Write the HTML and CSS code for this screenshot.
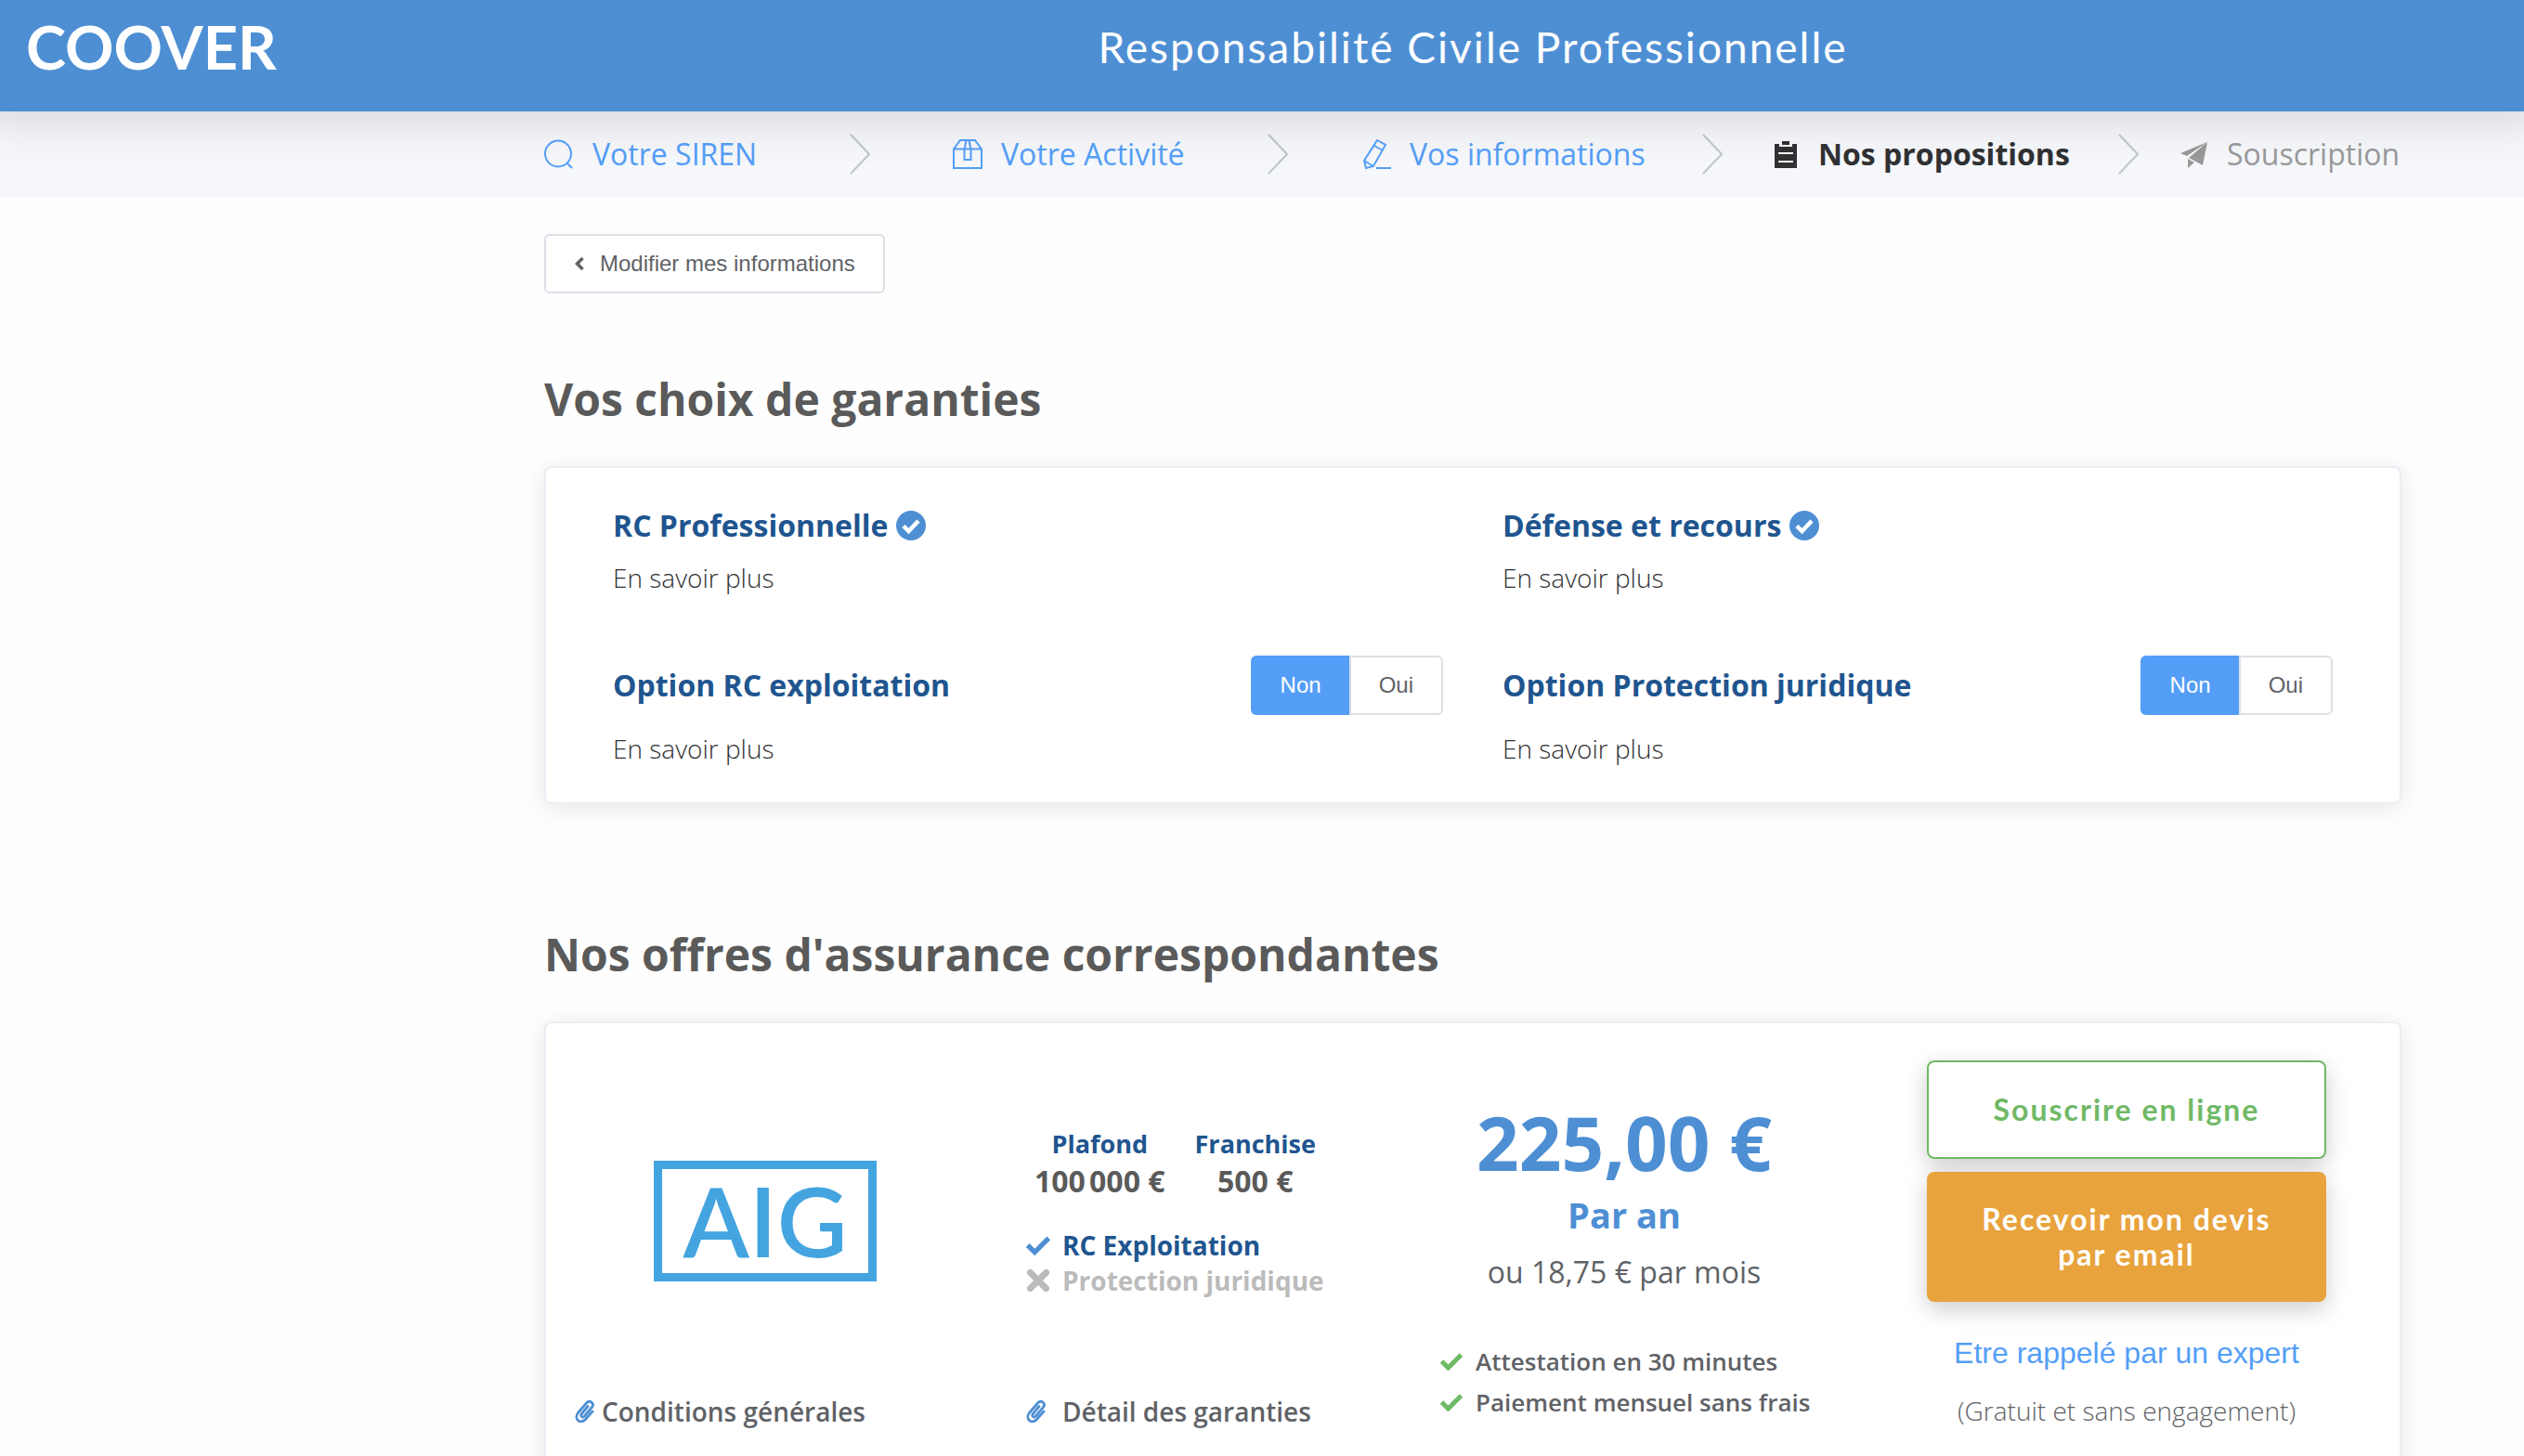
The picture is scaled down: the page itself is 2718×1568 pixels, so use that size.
FILE: index.html
```html
<!DOCTYPE html>
<html lang="fr">
<head>
<meta charset="utf-8">
<title>Coover – Responsabilité Civile Professionnelle</title>
<link rel="stylesheet" href="styles.css">
</head>
<body>
<svg class="sprite" aria-hidden="true">
  <symbol id="check" viewBox="0 0 26 20"><path d="M2.500 10L9.500 17L23.500 3" fill="none" stroke="currentColor" stroke-width="5" stroke-linejoin="miter"/></symbol>
  <symbol id="cross" viewBox="0 0 26 26"><path d="M4.500 4.500L21.500 21.500M21.500 4.500L4.500 21.500" fill="none" stroke="currentColor" stroke-width="7" stroke-linecap="round"/></symbol>
  <symbol id="badge" viewBox="0 0 32 32"><circle cx="16" cy="16" r="16" fill="currentColor"/><path d="M8 16.500L13.500 22L24 11" fill="none" stroke="#fff" stroke-width="4.500"/></symbol>
  <symbol id="clip" viewBox="0 0 24 26"><path d="M15 7.500L8.500 15.500C6.500 18 9.500 20.500 11.500 18L19.500 8.500C22.500 4 17 0 13.500 4L4.500 14.500C-.500 21 7 27.500 12.500 21.500L20 13" fill="none" stroke="currentColor" stroke-width="2.800" stroke-linecap="round"/></symbol>
  <symbol id="arrow" viewBox="0 0 22 44"><path d="M1 1L21 22L1 43" fill="none" stroke="currentColor" stroke-width="2"/></symbol>
</svg>
<div class="shell">
  <header class="topbar">
    <a class="brand" href="#">COOVER</a>
    <h1 class="topbar-title">Responsabilité Civile Professionnelle</h1>
  </header>
  <nav class="steps" aria-label="Étapes">
    <ol class="steps-list">
      <li class="step"><a href="#" class="step-link"><svg class="step-icon" viewBox="0 0 32 32" fill="none" stroke="currentColor" stroke-width="2"><circle cx="15" cy="15.500" r="14"/><path d="M24.500 25.500L30 31"/></svg>Votre SIREN</a><svg class="step-arrow"><use href="#arrow"/></svg></li>
      <li class="step"><a href="#" class="step-link"><svg class="step-icon" viewBox="0 0 32 32" fill="none" stroke="currentColor" stroke-width="2"><path d="M1 31V10.500L8 1H24L31 10.500V31ZM1 10.500H31M14.500 1L12.500 11V22H19.500V11L17.500 1"/></svg>Votre Activité</a><svg class="step-arrow"><use href="#arrow"/></svg></li>
      <li class="step"><a href="#" class="step-link"><svg class="step-icon" viewBox="0 0 32 32" fill="none" stroke="currentColor" stroke-width="2"><path d="M17 1L26 6L13 29L5 31L3 23ZM14 7L23 12M3 23L13 29M16 31H32"/></svg>Vos informations</a><svg class="step-arrow"><use href="#arrow"/></svg></li>
      <li class="step step-current"><a href="#" class="step-link" aria-current="step"><svg class="step-icon" viewBox="0 0 32 32" fill="currentColor"><path d="M5 5H10V8H24V5H29V31H5ZM9 14V16H25V14ZM9 23V25H25V23Z" fill-rule="evenodd"/><path d="M13 2H21V6H13Z"/></svg>Nos propositions</a><svg class="step-arrow"><use href="#arrow"/></svg></li>
      <li class="step step-next"><span class="step-link"><svg class="step-icon" viewBox="0 0 32 32" fill="currentColor"><path d="M31 3L2 15L9 18ZM31 3L11 20L26 28ZM10 21L17 25L10 31Z"/></svg>Souscription</span></li>
    </ol>
  </nav>
  <main class="content">
    <button class="back" type="button"><svg class="back-icon" viewBox="0 0 12 16"><path d="M9.500 2L3.500 8L9.500 14" fill="none" stroke="currentColor" stroke-width="3.500"/></svg>Modifier mes informations</button>

    <h2 class="title">Vos choix de garanties</h2>
    <section class="card choices">
      <div class="choice">
        <h3 class="choice-name">RC Professionnelle <svg class="badge"><use href="#badge"/></svg></h3>
        <a class="more" href="#">En savoir plus</a>
      </div>
      <div class="choice">
        <h3 class="choice-name">Défense et recours <svg class="badge"><use href="#badge"/></svg></h3>
        <a class="more" href="#">En savoir plus</a>
      </div>
      <div class="choice choice-option">
        <div class="choice-row">
          <h3 class="choice-name">Option RC exploitation</h3>
          <div class="toggle" role="radiogroup" aria-label="Option RC exploitation">
            <label class="toggle-item"><input type="radio" name="exploitation" checked><span>Non</span></label>
            <label class="toggle-item"><input type="radio" name="exploitation"><span>Oui</span></label>
          </div>
        </div>
        <a class="more" href="#">En savoir plus</a>
      </div>
      <div class="choice choice-option">
        <div class="choice-row">
          <h3 class="choice-name">Option Protection juridique</h3>
          <div class="toggle" role="radiogroup" aria-label="Option Protection juridique">
            <label class="toggle-item"><input type="radio" name="juridique" checked><span>Non</span></label>
            <label class="toggle-item"><input type="radio" name="juridique"><span>Oui</span></label>
          </div>
        </div>
        <a class="more" href="#">En savoir plus</a>
      </div>
    </section>

    <h2 class="title title-offers">Nos offres d'assurance correspondantes</h2>
    <article class="card offer">
      <div class="offer-insurer">
        <div class="aig">AIG</div>
        <a class="doc" href="#"><svg class="clip"><use href="#clip"/></svg>Conditions générales</a>
      </div>
      <div class="offer-cover">
        <dl class="limits">
          <div class="limit"><dt>Plafond</dt><dd>100&#8239;000 €</dd></div>
          <div class="limit"><dt>Franchise</dt><dd>500 €</dd></div>
        </dl>
        <ul class="covers">
          <li class="cover"><svg class="cover-icon tick"><use href="#check"/></svg>RC Exploitation</li>
          <li class="cover cover-off"><svg class="cover-icon"><use href="#cross"/></svg>Protection juridique</li>
        </ul>
        <a class="doc doc-wide" href="#"><svg class="clip"><use href="#clip"/></svg>Détail des garanties</a>
      </div>
      <div class="offer-price">
        <p class="price">225,00 €</p>
        <p class="period">Par an</p>
        <p class="monthly">ou 18,75 € par mois</p>
        <ul class="perks">
          <li class="perk"><svg class="perk-icon"><use href="#check"/></svg>Attestation en 30 minutes</li>
          <li class="perk"><svg class="perk-icon"><use href="#check"/></svg>Paiement mensuel sans frais</li>
        </ul>
      </div>
      <div class="offer-actions">
        <button class="action action-outline" type="button">Souscrire en ligne</button>
        <button class="action action-solid" type="button">Recevoir mon devis par email</button>
        <a class="callback" href="#">Etre rappelé par un expert</a>
        <p class="note">(Gratuit et sans engagement)</p>
      </div>
    </article>
  </main>
</div>
</body>
</html>
```
FILE: styles.css
```css
* { box-sizing: border-box; }
body, h1, h2, h3, p, ul, ol, dl, dd { margin: 0; padding: 0; }
ul, ol { list-style: none; }
a { color: inherit; text-decoration: none; }
button { cursor: pointer; }

body {
  font-family: "Open Sans", "Noto Sans", sans-serif;
  color: #606266;
  background: #fefefe;
}
.sprite { display: none; }

.shell {
  display: flex;
  flex-direction: column;
  height: 100vh;
  overflow: hidden;
}

/* top bar */
.topbar {
  display: flex;
  flex: none;
  height: 120px;
  color: #fff;
  background: #4e8fd4;
  box-shadow: 0 -16px 48px 24px rgba(0, 0, 0, .14);
  z-index: 1;
}
.brand {
  width: 454px;
  padding: 14px 0 0 28px;
  font: 700 65px/72px Lato, sans-serif;
}
.topbar-title {
  flex: 1;
  padding-top: 23px;
  font: 400 46px/56px Lato, sans-serif;
  letter-spacing: 2px;
  text-align: center;
}

/* progress steps */
.steps {
  flex: none;
  padding: 24px 132px 24px 586px;
  background: #f5f7fa;
}
.steps-list { display: flex; }
.step {
  display: flex;
  flex: 0 0 22%;
  align-items: center;
  height: 44px;
  font-size: 32px;
  line-height: 44px;
  color: #549ef7;
  white-space: nowrap;
}
.step:last-child { flex-basis: 12%; }
.step-link { display: flex; align-items: center; gap: 20px; padding-right: 10px; }
.step-icon { width: 32px; height: 32px; }
.step-arrow {
  width: 22px;
  height: 44px;
  margin: 0 auto;
  color: #c0c4cc;
}
.step-current { font-weight: 700; color: #303133; }
.step-next { color: #999; }

/* page content */
.content {
  flex: 1;
  min-height: 0;
  padding: 40px 132px 40px 586px;
  overflow-y: auto;
  scrollbar-width: none;
}
.back {
  display: flex;
  align-items: center;
  gap: 16px;
  height: 64px;
  padding: 0 30px;
  font: 24px "Liberation Sans", Arial, sans-serif;
  color: #606266;
  background: #fff;
  border: 2px solid #dcdfe6;
  border-radius: 6px;
}
.back-icon { width: 12px; height: 16px; }
.title {
  margin: 80px 0 38px;
  font-size: 48px;
  line-height: 68px;
  color: #5a5a5a;
}
.title-offers { margin-top: 128px; }
.card {
  background: #fff;
  border: 2px solid #ebeef5;
  border-radius: 8px;
  box-shadow: 0 4px 24px rgba(0, 0, 0, .1);
}

/* cover choices */
.choices {
  display: grid;
  grid-template-columns: 1fr 1fr;
  column-gap: 64px;
  row-gap: 64px;
  padding: 40px 72px 38px;
}
.choice-row {
  display: flex;
  justify-content: space-between;
  align-items: center;
}
.choice-name {
  display: flex;
  align-items: center;
  gap: 9px;
  font-size: 32px;
  line-height: 44px;
  color: #20558f;
}
.badge { width: 32px; height: 32px; color: #4e8fd4; }
.more {
  display: block;
  margin-top: 14px;
  font-size: 28px;
  font-weight: 300;
  line-height: 40px;
  color: #303133;
}
.choice-option .more { margin-top: 16px; }
.toggle { display: flex; }
.toggle-item { position: relative; }
.toggle-item input {
  position: absolute;
  inset: 0;
  margin: 0;
  opacity: 0;
}
.toggle-item span {
  display: block;
  padding: 0 30px;
  font: 24px/60px "Liberation Sans", Arial, sans-serif;
  background: #fff;
  border: 2px solid #dcdfe6;
}
.toggle-item:first-child span { border-right-width: 0; border-radius: 6px 0 0 6px; }
.toggle-item:last-child span { border-radius: 0 6px 6px 0; }
.toggle-item input:checked + span {
  color: #fff;
  background: #549ef7;
  border-color: #549ef7;
}

/* offer */
.offer {
  display: grid;
  grid-template-columns: 474fr 440fr 494fr 588fr;
  min-height: 520px;
}
.offer-insurer {
  display: flex;
  flex-direction: column;
  align-items: flex-start;
  padding: 148px 0 0 30px;
}
.aig {
  width: 240px;
  height: 130px;
  margin: 0 0 120px 86px;
  font: 600 104px/110px Lato, sans-serif;
  text-align: center;
  color: #44a4e0;
  border: 9px solid #44a4e0;
}
.doc {
  display: flex;
  align-items: center;
  gap: 6px;
  font-size: 28px;
  font-weight: 600;
  line-height: 40px;
}
.doc-wide { gap: 16px; }
.clip { width: 24px; height: 26px; color: #4e8fd4; }
.offer-cover { padding: 110px 0 0 42px; }
.limits { display: flex; gap: 32px; padding-left: 10px; text-align: center; }
.limits dt {
  font-size: 27px;
  font-weight: 700;
  line-height: 40px;
  color: #20558f;
}
.limits dd { font-size: 32px; font-weight: 700; line-height: 40px; color: #5a5a5a; }
.covers { margin: 30px 0 102px; }
.cover {
  display: flex;
  align-items: center;
  gap: 12px;
  font-size: 28px;
  font-weight: 700;
  line-height: 38px;
  color: #20558f;
}
.cover-icon { width: 28px; height: 26px; }
.tick { color: #4e8fd4; }
.cover-off { color: #bbb; }
.offer-price { padding-top: 78px; }
.price, .period, .monthly { text-align: center; }
.price { font-size: 80px; font-weight: 700; line-height: 100px; color: #4e8fd4; }
.period { font-size: 38px; font-weight: 700; line-height: 56px; color: #4e8fd4; }
.monthly { font-size: 32px; line-height: 68px; }
.perks { margin: 40px 0 0 48px; }
.perk {
  display: flex;
  align-items: center;
  gap: 13px;
  font-size: 26px;
  font-weight: 600;
  line-height: 44px;
}
.perk-icon { width: 26px; height: 20px; color: #70b966; }
.offer-actions {
  display: flex;
  flex-direction: column;
  align-items: center;
  padding-top: 40px;
  text-align: center;
}
.action {
  width: 430px;
  padding: 32px 40px;
  font: 700 32px/38px Lato, sans-serif;
  letter-spacing: 2px;
  border: 0;
  border-radius: 8px;
  box-shadow: 0 8px 24px rgba(0, 0, 0, .2);
}
.action-outline { color: #70b966; background: #fff; border: 2px solid #70b966; }
.action-solid { margin-top: 14px; color: #fff; background: #e8a33d; }
.callback {
  margin-top: 35px;
  font: 32px/40px "Liberation Sans", Arial, sans-serif;
  color: #549ef7;
}
.note { margin-top: 22px; font-size: 28px; font-weight: 300; line-height: 40px; }
```
